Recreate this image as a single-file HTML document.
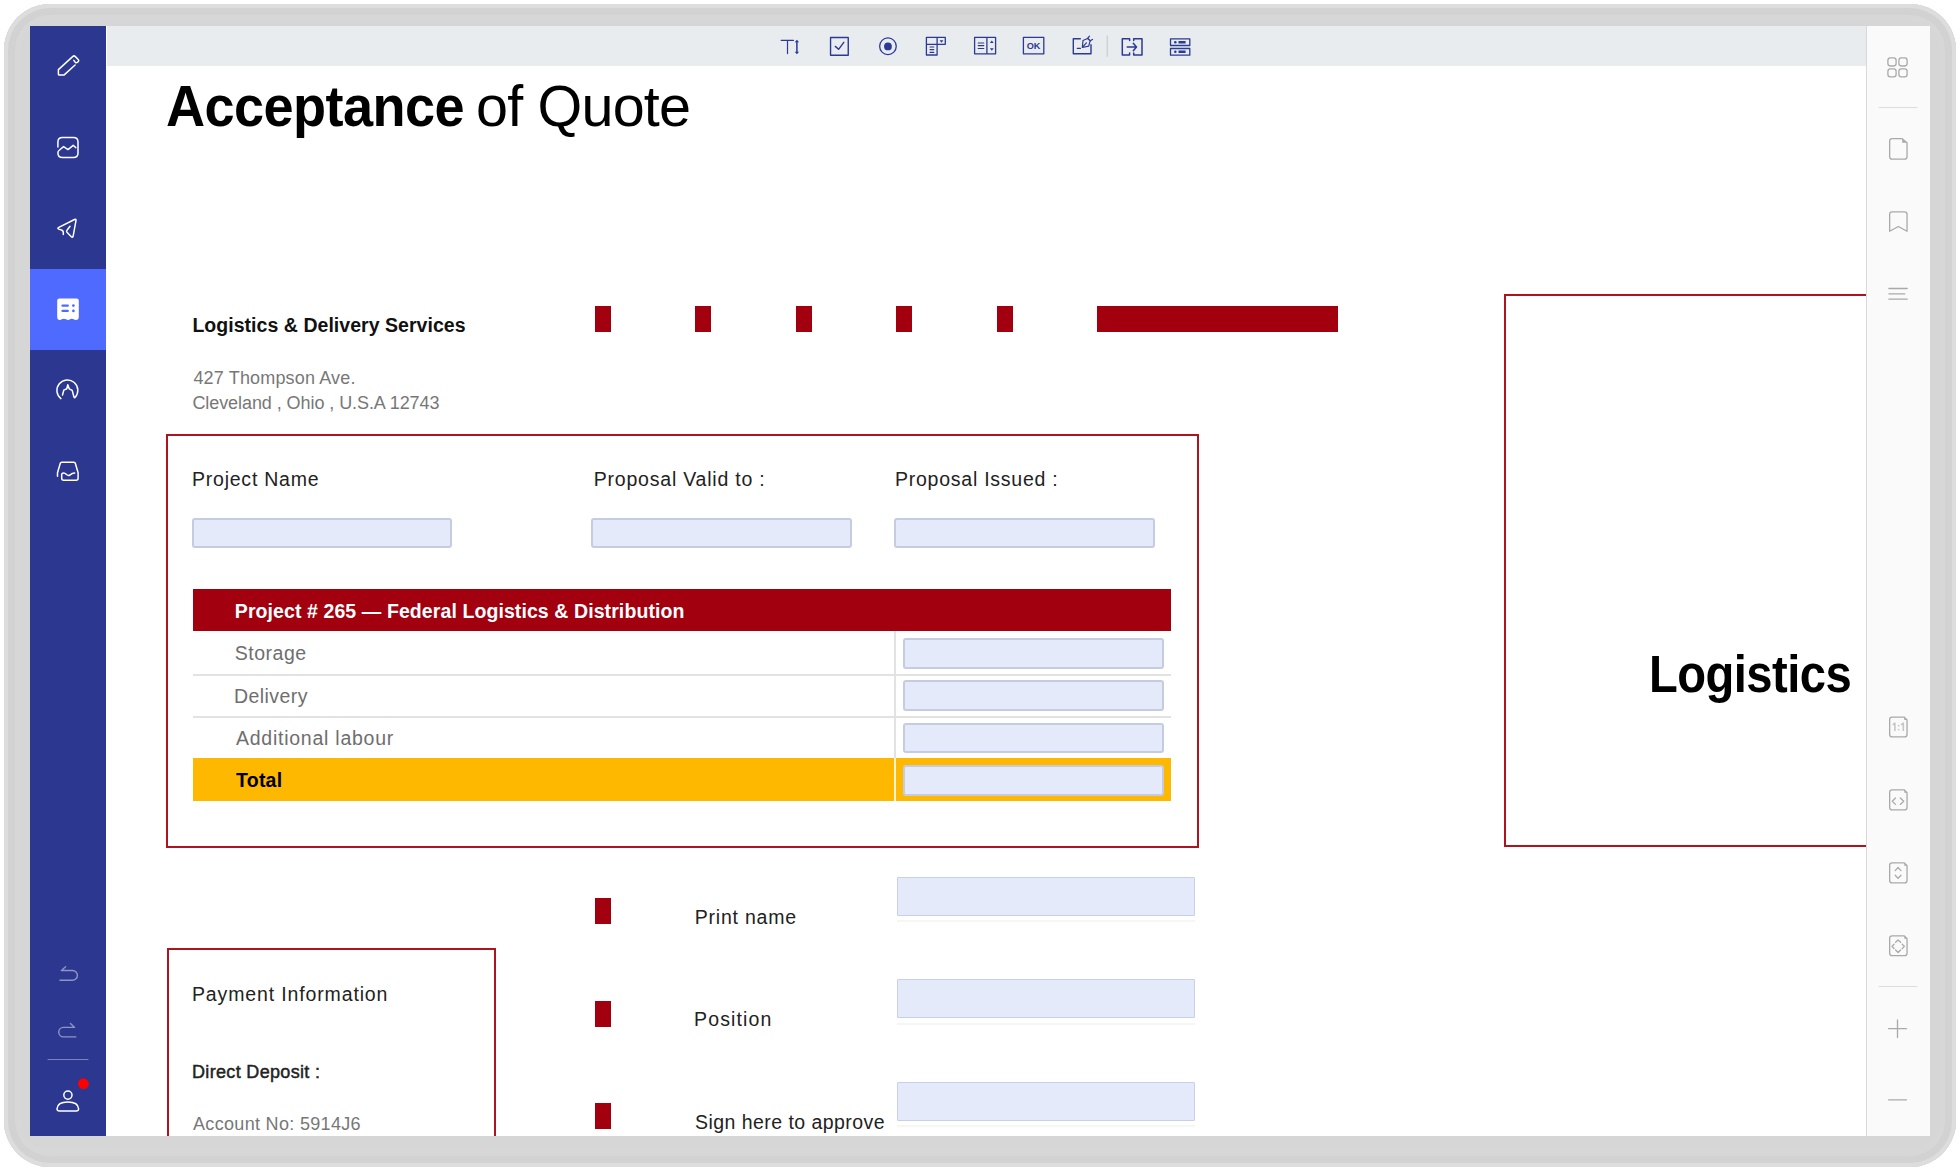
<!DOCTYPE html>
<html><head><meta charset="utf-8">
<style>
*{margin:0;padding:0;box-sizing:border-box}
html,body{width:1960px;height:1170px;overflow:hidden;background:#fff;font-family:"Liberation Sans",sans-serif}
.abs{position:absolute}
#frame{position:absolute;left:4px;top:3.5px;width:1952px;height:1163.5px;border-radius:46px;background:#D6D6D6;
 box-shadow:inset 0 0 0 4px #DDDDDD, inset 0 0 0 11px #D2D2D2, inset 0 0 0 17px #D7D7D7}
#screen{position:absolute;left:30px;top:26px;width:1900px;height:1110px;background:#fff;overflow:hidden}
#side{position:absolute;left:0;top:0;width:76px;height:1110px;background:#2C3790}
#side .act{position:absolute;left:0;top:243px;width:76px;height:81px;background:#4F6BFF}
#tool{position:absolute;left:77px;top:0;width:1759px;height:40px;background:#E8ECEF}
#rp{position:absolute;left:1836px;top:0;width:64px;height:1110px;background:#FAFAFA;border-left:1px solid #D9D9D9}
.t{position:absolute;white-space:nowrap;line-height:1;z-index:2}
.red{background:#A3000F}
.fld{position:absolute;background:#E5EAFB;border:2px solid #C5CCE0;border-radius:3px}
.fld2{position:absolute;background:#E5EAFB;border:1.5px solid #C8CFEA;border-radius:1px}
</style></head>
<body>
<div id="frame"></div>
<div id="screen">
  <div id="side"><div class="act"></div></div>
  <div id="tool"></div>
  <div id="rp"></div>
</div>
<div id="doc" style="position:absolute;left:106px;top:66px;width:1760px;height:1070px;overflow:hidden"><div style="position:absolute;left:-106px;top:-66px;width:1960px;height:1170px">
<!-- document content, page coords -->
<!--TEXT-->
<div class="t" style="left:166.1px;top:78.33px;font-size:57.5px;font-weight:bold;letter-spacing:-0.6px;transform:scaleX(0.941);transform-origin:0 0;color:#000">Acceptance</div>
<div class="t" style="left:476.0px;top:78.33px;font-size:57.5px;letter-spacing:-0.79px;color:#000">of Quote</div>
<div class="t" style="left:192.4px;top:316.09px;font-size:19.5px;font-weight:bold;letter-spacing:0.04px;color:#111">Logistics &amp; Delivery Services</div>
<div class="t" style="left:193.4px;top:368.56px;font-size:18px;letter-spacing:0.16px;color:#777">427 Thompson Ave.</div>
<div class="t" style="left:192.4px;top:393.96px;font-size:18px;letter-spacing:-0.07px;color:#777">Cleveland , Ohio , U.S.A 12743</div>
<div class="t" style="left:192.0px;top:470.49px;font-size:19.5px;letter-spacing:0.77px;color:#222">Project Name</div>
<div class="t" style="left:593.8px;top:470.49px;font-size:19.5px;letter-spacing:0.78px;color:#222">Proposal Valid to :</div>
<div class="t" style="left:895.0px;top:470.49px;font-size:19.5px;letter-spacing:0.75px;color:#222">Proposal Issued :</div>
<div class="t" style="left:234.8px;top:602.49px;font-size:19.5px;font-weight:bold;letter-spacing:0.09px;color:#fff">Project # 265 — Federal Logistics &amp; Distribution</div>
<div class="t" style="left:234.8px;top:644.49px;font-size:19.5px;letter-spacing:0.50px;color:#6e6e6e">Storage</div>
<div class="t" style="left:234.0px;top:687.49px;font-size:19.5px;letter-spacing:0.43px;color:#6e6e6e">Delivery</div>
<div class="t" style="left:236.0px;top:729.29px;font-size:19.5px;letter-spacing:0.75px;color:#6e6e6e">Additional labour</div>
<div class="t" style="left:236.0px;top:771.49px;font-size:19.5px;font-weight:bold;letter-spacing:0.25px;color:#000">Total</div>
<div class="t" style="left:694.8px;top:907.69px;font-size:19.5px;letter-spacing:0.78px;color:#222">Print name</div>
<div class="t" style="left:694.0px;top:1010.49px;font-size:19.5px;letter-spacing:1.14px;color:#222">Position</div>
<div class="t" style="left:695.0px;top:1113.49px;font-size:19.5px;letter-spacing:0.45px;color:#222">Sign here to approve</div>
<div class="t" style="left:192.0px;top:984.69px;font-size:19.5px;letter-spacing:0.86px;color:#222">Payment Information</div>
<div class="t" style="left:192.0px;top:1062.76px;font-size:18px;-webkit-text-stroke:0.45px #222;letter-spacing:0.33px;color:#222">Direct Deposit :</div>
<div class="t" style="left:193.0px;top:1114.76px;font-size:18px;letter-spacing:0.32px;color:#777">Account No: 5914J6</div>
<div class="t" style="left:1649.2px;top:648.83px;font-size:51px;font-weight:bold;letter-spacing:-0.6px;transform:scaleX(0.925);transform-origin:0 0;color:#000">Logistics</div>
<!--/TEXT-->


<div class="abs red" style="left:595px;top:306px;width:16px;height:26px"></div>
<div class="abs red" style="left:695px;top:306px;width:16px;height:26px"></div>
<div class="abs red" style="left:796px;top:306px;width:16px;height:26px"></div>
<div class="abs red" style="left:896px;top:306px;width:16px;height:26px"></div>
<div class="abs red" style="left:997px;top:306px;width:16px;height:26px"></div>
<div class="abs red" style="left:1097px;top:306px;width:241px;height:26px"></div>

<div class="abs" style="left:166px;top:434px;width:1032.5px;height:413.5px;border:2px solid #AD1420"></div>
<div class="fld" style="left:192px;top:518px;width:260px;height:30px"></div>
<div class="fld" style="left:591px;top:518px;width:261px;height:30px"></div>
<div class="fld" style="left:894px;top:518px;width:261px;height:30px"></div>

<!-- table -->
<div class="abs red" style="left:193px;top:589px;width:978px;height:42px"></div>
<div class="abs" style="left:193px;top:673.5px;width:978px;height:2px;background:#E2E2E2"></div>
<div class="abs" style="left:193px;top:715.5px;width:978px;height:2px;background:#E2E2E2"></div>
<div class="abs" style="left:894px;top:631px;width:2px;height:127px;background:#E2E2E2"></div>
<div class="abs" style="left:193px;top:758px;width:978px;height:43px;background:#FFB800"></div>
<div class="abs" style="left:894px;top:758px;width:2px;height:43px;background:#FFF3D6"></div>
<div class="fld" style="left:903px;top:638px;width:261px;height:31px"></div>
<div class="fld" style="left:903px;top:680px;width:261px;height:31px"></div>
<div class="fld" style="left:903px;top:723px;width:261px;height:30px"></div>
<div class="fld" style="left:903px;top:765px;width:261px;height:31px"></div>

<!-- bottom -->
<div class="abs red" style="left:595px;top:898px;width:16px;height:26px"></div>
<div class="abs red" style="left:595px;top:1001px;width:16px;height:26px"></div>
<div class="abs red" style="left:595px;top:1103px;width:16px;height:26px"></div>
<div class="fld2" style="left:897px;top:877px;width:298px;height:39px"></div>
<div class="fld2" style="left:897px;top:979px;width:298px;height:39px"></div>
<div class="fld2" style="left:897px;top:1082px;width:298px;height:39px"></div>
<div class="abs" style="left:897px;top:920px;width:298px;height:2px;background:#F6F6F6"></div>
<div class="abs" style="left:897px;top:1023px;width:298px;height:2px;background:#F6F6F6"></div>
<div class="abs" style="left:897px;top:1125px;width:298px;height:2px;background:#F6F6F6"></div>

<div class="abs" style="left:166.5px;top:947.5px;width:329px;height:220px;border:2px solid #AD1420"></div>

<!-- right box -->
<div class="abs" style="left:1504px;top:294px;width:400px;height:553px;border:2px solid #AD1420"></div>

</div></div>
<svg id="icons" width="1960" height="1170" viewBox="0 0 1960 1170" style="position:absolute;left:0;top:0;z-index:5;pointer-events:none" fill="none" stroke-linecap="round" stroke-linejoin="round">
<!-- sidebar -->
<g stroke="#fff" stroke-width="1.5">
<path d="M75.1 65 L63.9 75.1 L59.3 75.1 Q58.4 75.1 58.4 74.2 L58.4 69.6 L72.9 56.4 Q74 55.4 75.1 56.4 L78.2 59.5 Q79.2 60.6 78.4 61.6 Q76.8 63.4 75.3 62.3 L73.8 60.4"/>
<path d="M57.9 146.9 L57.9 141.9 Q57.9 137.4 62.4 137.4 L73.5 137.4 Q78 137.4 78 141.9 L78 153 Q78 157.5 73.5 157.5 L62.4 157.5 Q57.9 157.5 57.9 153 Q57.9 151.2 59.5 150 L63.6 146.6 L68 149.6 L73.2 145.3 L75.8 147.6"/>
<path d="M63.3 234.6 L63.3 232.5 Q63.3 230.3 60.8 229.7 L58.7 229.1 Q57 228.3 58.8 227.3 L74.5 219.5 Q76.3 218.7 76 220.5 L73.1 236.3 Q72.5 237.9 71.3 236.8 L67 232.3 Q66.1 231.2 67 230.2 L70 226.3"/>
<path d="M60.9 398.6 A10.45 10.45 0 1 1 75 397.5 Q74.1 398 73.8 396.5 L72.2 390.4 L69.2 388.8 L67.8 384.8 L66.8 388.8 L63.8 390.1 L62.5 395"/>
<path d="M57.5 476.2 L57.5 472.8 L60.3 463.3 Q60.6 462.2 61.8 462.2 L73.8 462.2 Q75 462.2 75.3 463.3 L78.1 472.8 L78.1 478.3 Q78.1 480.3 76.1 480.3 L63.7 480.3 Q61.7 480.3 61.7 478.3 L61.7 475 Q61.7 473 63.5 473 Q65 473 66.5 474.5 Q68.3 476 70 475 Q72 473 74.7 473"/>
<circle cx="67.9" cy="1095.1" r="4.1"/>
<path d="M59.5 1111 Q57 1111 57 1108.7 Q57.5 1102 67.8 1102 Q78.1 1102 78.6 1108.7 Q78.6 1111 76.1 1111 Z"/>
</g>
<path fill="#fff" d="M57.2 300.6 Q57.2 298.4 59.4 298.4 L76.6 298.4 Q78.8 298.4 78.8 300.6 L78.8 317 Q78.8 319.9 75.8 319.9 C74 319.9 73.5 318.7 71.8 318.7 C70 318.7 70 319.9 68.2 319.9 C66.4 319.9 65.6 318.7 63.8 318.7 C62 318.7 61.6 319.9 59.8 319.9 Q57.2 319.9 57.2 317 Z"/>
<g fill="#4F6BFF"><rect x="61.4" y="304.5" width="7.5" height="2.3" rx="1.1"/><rect x="61.4" y="309.8" width="7.5" height="2.2" rx="1.1"/><circle cx="73.4" cy="305.6" r="1.35"/><circle cx="73.4" cy="310.9" r="1.35"/></g>
<g stroke="rgba(255,255,255,0.47)" stroke-width="1.4">
<path d="M65.6 966.7 L61.4 970.5 L72.5 970.5 A4.9 4.9 0 0 1 72.5 980.3 L60 980.3"/>
<path d="M70.5 1023.5 L74.6 1027.4 L63.5 1027.4 A4.75 4.75 0 0 0 63.5 1036.9 L75.8 1036.9"/>
</g>
<line x1="48" y1="1059.5" x2="88" y2="1059.5" stroke="rgba(255,255,255,0.38)" stroke-width="1"/>
<circle cx="83.4" cy="1083.7" r="5.4" fill="#FF0000"/>
<!-- right panel -->
<g stroke="#A9A9A9" stroke-width="1.3">
<rect x="1887.9" y="57.9" width="8.2" height="8.1" rx="2.4"/>
<rect x="1898.9" y="57.9" width="8.2" height="8.1" rx="2.4"/>
<rect x="1887.9" y="68.8" width="8.2" height="8" rx="2.4"/>
<rect x="1898.9" y="68.8" width="8.2" height="8" rx="2.4"/>
<path d="M1902.2 138.65 L1892.1 138.65 Q1889.65 138.65 1889.65 141.1 L1889.65 156.7 Q1889.65 159.15 1892.1 159.15 L1904.6 159.15 Q1907.05 159.15 1907.05 156.7 L1907.05 142.7 Z"/>
<path d="M1889.65 231.3 L1889.65 214.3 Q1889.65 211.85 1892.1 211.85 L1904.6 211.85 Q1907.05 211.85 1907.05 214.3 L1907.05 231.3 L1898.35 226.5 Z"/>
<path d="M1888.9 288.5 H1907.2 M1888.9 293.8 H1904.8 M1888.9 299.2 H1907.2"/>
<path d="M1904.3 717.15 L1892.1 717.15 Q1889.65 717.15 1889.65 719.6 L1889.65 734.4 Q1889.65 736.85 1892.1 736.85 L1904.6 736.85 Q1907.05 736.85 1907.05 734.4 L1907.05 720 Z"/>
<path d="M1904.3 789.85 L1892.1 789.85 Q1889.65 789.85 1889.65 792.3 L1889.65 807.5 Q1889.65 809.95 1892.1 809.95 L1904.6 809.95 Q1907.05 809.95 1907.05 807.5 L1907.05 792.7 Z"/>
<path d="M1904.3 862.85 L1892.1 862.85 Q1889.65 862.85 1889.65 865.3 L1889.65 880.5 Q1889.65 882.95 1892.1 882.95 L1904.6 882.95 Q1907.05 882.95 1907.05 880.5 L1907.05 865.7 Z"/>
<path d="M1904.3 935.85 L1892.1 935.85 Q1889.65 935.85 1889.65 938.3 L1889.65 953.15 Q1889.65 955.6 1892.1 955.6 L1904.6 955.6 Q1907.05 955.6 1907.05 953.15 L1907.05 938.7 Z"/>
<path d="M1895.5 798 L1892.3 801.3 L1895.5 804.4 M1900.3 798 L1903.7 801.3 L1900.3 804.4"/>
<path d="M1895.2 870.6 L1898.1 867.5 L1901 870.6 M1895.2 875.3 L1898.1 878.4 L1901 875.3"/>
<path d="M1895.6 942.3 L1898.1 940 L1900.6 942.3 M1895.6 950 L1898.1 952.5 L1900.6 950 M1894 944.2 L1892 946.4 L1894 948.5 M1902.2 944.2 L1904.4 946.4 L1902.2 948.5"/>
<path d="M1888.6 1028.7 H1906.5 M1897.5 1019.8 V1037.6 M1888.6 1099.8 H1906.5"/>
</g>
<g fill="#A9A9A9">
<path d="M1902.2 138.65 L1907.05 142.7 L1902.2 142.7 Z"/>
<path d="M1904.3 717.15 L1907.05 720 L1904.3 720 Z"/>
<path d="M1904.3 789.85 L1907.05 792.7 L1904.3 792.7 Z"/>
<path d="M1904.3 862.85 L1907.05 865.7 L1904.3 865.7 Z"/>
<path d="M1904.3 935.85 L1907.05 938.7 L1904.3 938.7 Z"/>
</g>
<path d="M1892.7 724.8 L1894.9 723.2 V731.1 M1901.1 724.8 L1903.3 723.2 V731.1" stroke="#C6C6C6" stroke-width="1.6" stroke-linecap="butt"/><circle cx="1898.7" cy="725.6" r="0.9" fill="#C6C6C6"/><circle cx="1898.7" cy="729.6" r="0.9" fill="#C6C6C6"/>
<line x1="1879" y1="107.5" x2="1917" y2="107.5" stroke="#DDDDDD" stroke-width="1"/>
<line x1="1879" y1="986.5" x2="1917" y2="986.5" stroke="#DDDDDD" stroke-width="1"/>
<!-- toolbar -->
<g stroke="#2B3A94" stroke-width="1.3">
<path d="M781.2 40.4 H793.4 M787.5 40.4 V53.6" stroke-width="1.2"/>
<path d="M796.9 41.5 V52.5" stroke-width="1.5"/>
<rect x="830.55" y="37.45" width="17.7" height="17.8" stroke-width="1.4"/>
<path d="M835.3 46.4 L838.6 49.3 L843.8 42.3" stroke-width="1.4"/>
<circle cx="887.95" cy="46.25" r="8.3"/>
<path d="M926.4 37.4 H945.3 V44.3 H926.4 Z M926.4 44.3 V55 H937.1 V37.4"/>
<path d="M930 47 H933.8 M930 49.6 H933.8 M930 52.4 H933.8" stroke-width="1.1"/>
<path d="M974.6 37.4 H995.6 V53.8 H974.6 Z M986.9 37.4 V53.8"/>
<path d="M978.2 43 H983.8 M978.2 45.6 H983.8 M978.2 48.5 H983.8" stroke-width="1.1"/>
<rect x="1023.4" y="37.4" width="20.4" height="16.4"/>
<path d="M1080.3 38.7 H1073.3 V53.8 H1091 V44.6" stroke-width="1.4"/>
<path d="M1077.3 48.4 H1080.4" stroke-width="1.2"/>
<path d="M1082.3 47.5 L1083 40.5 L1087.5 38.5 L1090.2 40.7 L1088.7 46.2 Z M1087.5 38.5 L1089.5 36.2 M1090.2 40.7 L1092.5 39.5 M1087.7 38.3 L1090.6 40.9 M1082.6 47.2 L1086.4 42.8" stroke-width="1.2"/>
<path d="M1129.6 40.5 V38.8 H1122.3 V55 H1129.6 V53" stroke-width="1.5"/>
<path d="M1133.7 40.5 V38.8 H1142 V55 H1133.7 V53" stroke-width="1.5"/>
<path d="M1127.2 47.1 H1136.3 M1133.3 43.3 L1136.5 47.1 L1133.3 50.8" stroke-width="1.5"/>
<rect x="1170.5" y="38.8" width="19.3" height="6.7"/>
<rect x="1170.5" y="48.5" width="19.3" height="6.7"/>
<path d="M1178.5 42.3 H1185.6 M1178.5 51.7 H1185.6" stroke-width="2.4" stroke-linecap="butt"/>
</g>
<g fill="#2B3A94">
<path d="M794.7 42.3 L796.9 39.8 L799.1 42.3 Z M794.7 51.8 L796.9 54.3 L799.1 51.8 Z"/>
<circle cx="887.95" cy="46.4" r="3.9"/>
<path d="M939.6 40.2 H943.4 L941.5 42.8 Z"/>
<path d="M989.9 43 L991.8 40.6 L993.7 43 Z M989.9 48.3 L991.8 50.7 L993.7 48.3 Z"/>
<circle cx="1175.3" cy="42.3" r="1.3"/><circle cx="1175.3" cy="51.7" r="1.3"/>
</g>
<text x="1033.6" y="49" font-family="Liberation Sans" font-size="9.2" font-weight="bold" fill="#2B3A94" text-anchor="middle">OK</text>
<line x1="1107.3" y1="36" x2="1107.3" y2="56.3" stroke="#D2D2D2" stroke-width="1.5"/>
</svg>
</body></html>
